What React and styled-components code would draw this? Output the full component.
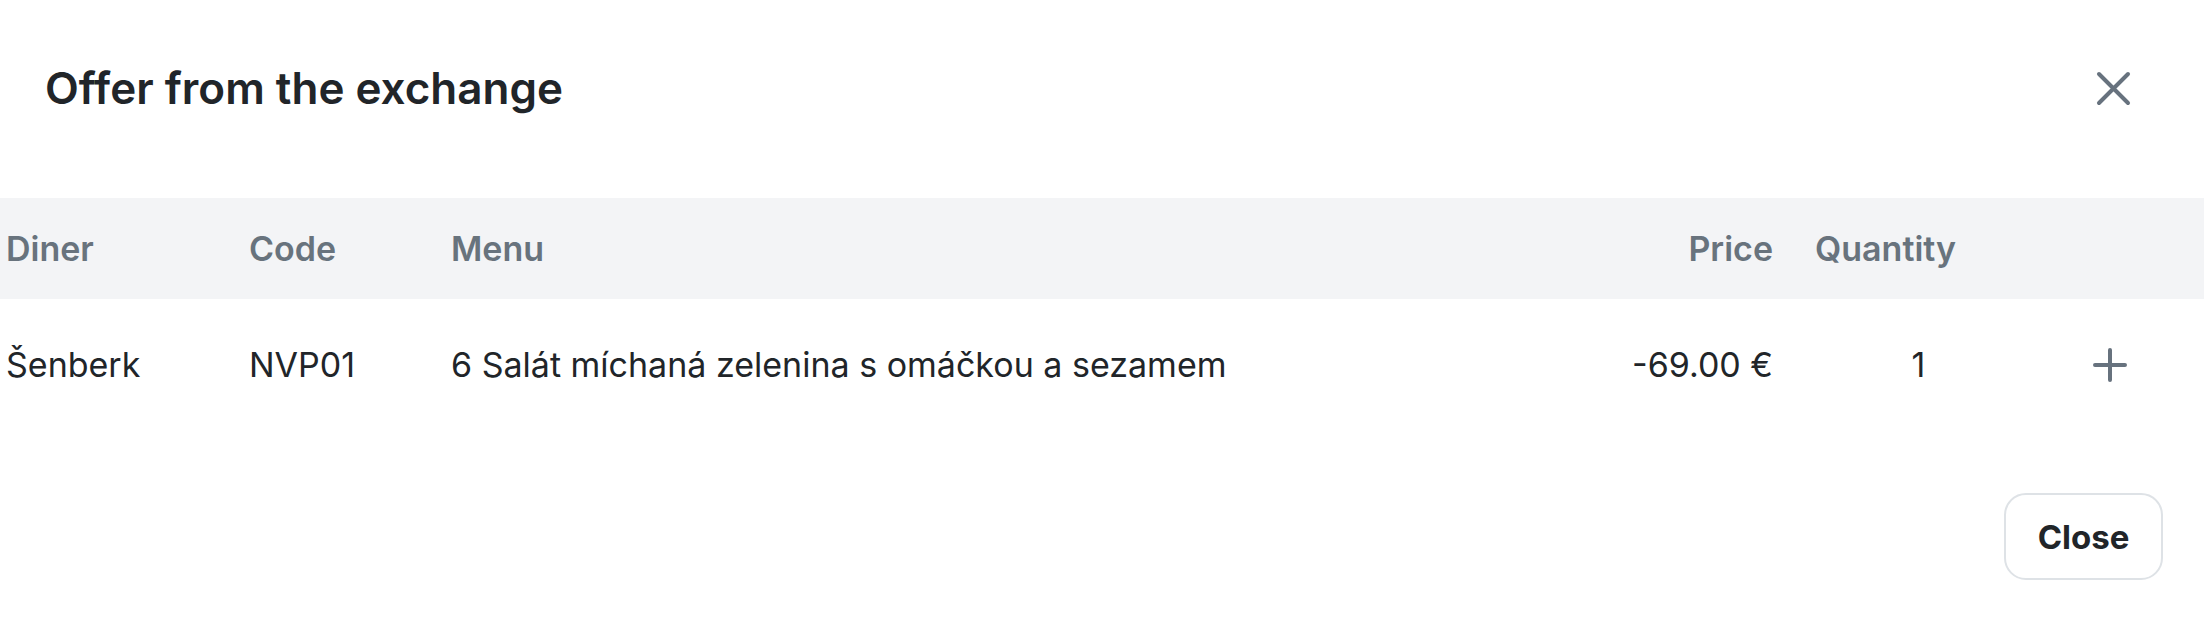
import React from "react";
import styled, { createGlobalStyle } from "styled-components";

const Global = createGlobalStyle`
  html, body { margin: 0; padding: 0; background: #ffffff; }
  body { font-family: Inter, "Noto Sans", sans-serif; color: #212529; }
`;

const Dialog = styled.div`
  width: 2204px;
  height: 624px;
  background: #fff;
  display: flex;
  flex-direction: column;
`;

const Header = styled.div`
  height: 176px;
  display: flex;
  align-items: center;
  justify-content: space-between;
  padding: 0 63px 0 45px;
  margin-bottom: 22px;
`;

const Title = styled.h2`
  margin: 0;
  font-size: 44px;
  font-weight: 600;
  letter-spacing: 0;
  color: #212529;
`;

const IconButton = styled.button`
  width: 56px;
  height: 56px;
  border: 0;
  background: transparent;
  padding: 0;
  display: flex;
  align-items: center;
  justify-content: center;
  color: #67727e;
  cursor: pointer;
`;

const Grid = styled.div`
  display: grid;
  grid-template-columns: 243px 202px 1fr 230px 219px 176px;
`;

const HeadRow = styled(Grid)`
  height: 101px;
  background: #f3f4f6;
  align-items: center;
  color: #68737d;
  font-size: 34px;
  font-weight: 600;
`;

const BodyRow = styled(Grid)`
  height: 131px;
  align-items: center;
  font-size: 34px;
  font-weight: 400;
  color: #212529;
`;

const Cell = styled.div`
  padding: 0 6px;
  white-space: nowrap;
  display: flex;
  justify-content: ${(p) => (p.$align === "right" ? "flex-end" : p.$align === "center" ? "center" : "flex-start")};
  padding-right: ${(p) => (p.$align === "right" ? "36px" : p.$pr || "6px")};
`;

const Footer = styled.div`
  display: flex;
  justify-content: flex-end;
  padding: 63px 41px 0 0;
`;

const CloseButton = styled.button`
  width: 159px;
  height: 87px;
  border: 2px solid #dee2e6;
  border-radius: 22px;
  background: #fff;
  font-family: Inter, "Noto Sans", sans-serif;
  font-size: 33px;
  font-weight: 700;
  color: #212529;
  cursor: pointer;
`;

const XIcon = () => (
  <svg width="37" height="37" viewBox="0 0 37 37" fill="none">
    <path d="M4 4 L33 33 M33 4 L4 33" stroke="currentColor" strokeWidth="4" strokeLinecap="round" />
  </svg>
);

const PlusIcon = () => (
  <svg width="36" height="36" viewBox="0 0 36 36" fill="none">
    <path d="M18 3 V33 M3 18 H33" stroke="currentColor" strokeWidth="4" strokeLinecap="round" />
  </svg>
);

export default function App() {
  return (
    <>
      <Global />
      <Dialog>
        <Header>
          <Title>Offer from the exchange</Title>
          <IconButton aria-label="Close">
            <XIcon />
          </IconButton>
        </Header>
        <HeadRow>
          <Cell>Diner</Cell>
          <Cell>Code</Cell>
          <Cell>Menu</Cell>
          <Cell $align="right">Price</Cell>
          <Cell>Quantity</Cell>
          <Cell />
        </HeadRow>
        <BodyRow>
          <Cell>Šenberk</Cell>
          <Cell>NVP01</Cell>
          <Cell>6 Salát míchaná zelenina s omáčkou a sezamem</Cell>
          <Cell $align="right">-69.00 €</Cell>
          <Cell $align="center">1</Cell>
          <Cell $align="center" $pr="18px">
            <IconButton aria-label="Add">
              <PlusIcon />
            </IconButton>
          </Cell>
        </BodyRow>
        <Footer>
          <CloseButton>Close</CloseButton>
        </Footer>
      </Dialog>
    </>
  );
}
